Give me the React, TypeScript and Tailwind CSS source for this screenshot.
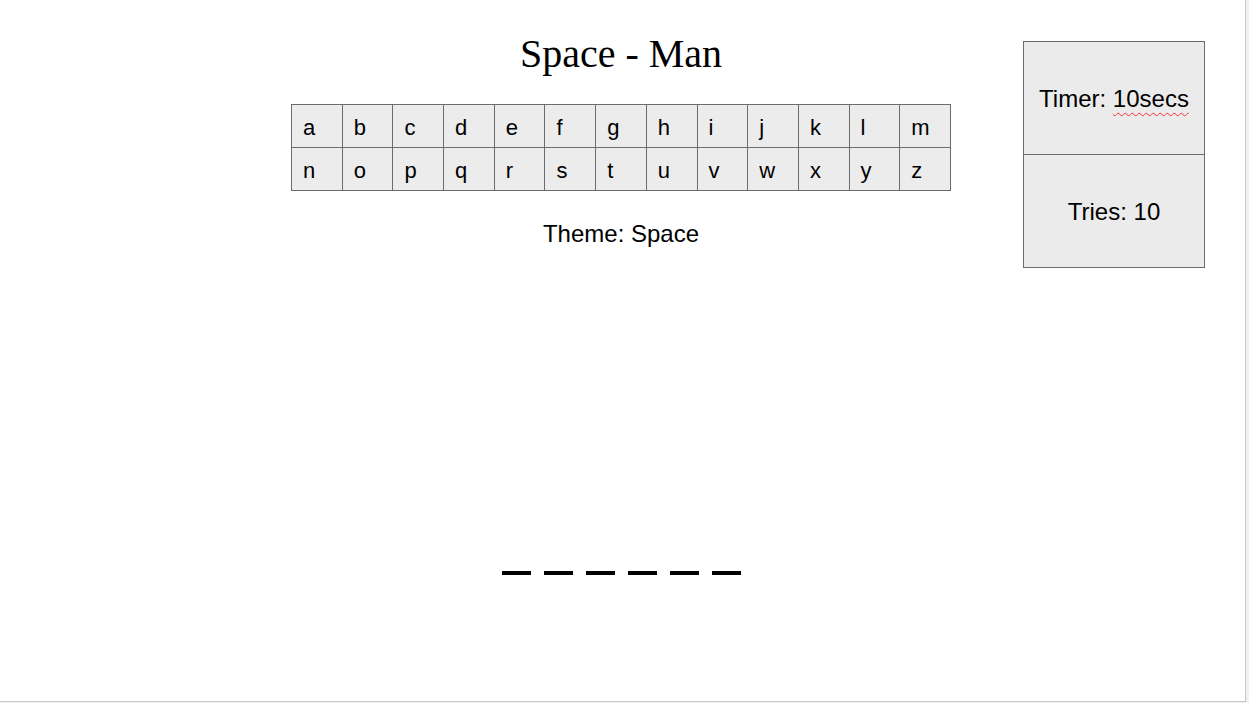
const rows = ["abcdefghijklm", "nopqrstuvwxyz"];

function LetterGrid() {
  return (
    <div className="grid w-[660px] grid-cols-13 border-l border-t border-[#6b6b6b]">
      {rows.join("").split("").map((ch) => (
        <div
          key={ch}
          className="flex h-[43px] items-center border-b border-r border-[#6b6b6b] bg-[#ececec] pl-[11px] pt-[2px] text-[22px] leading-[25px] text-black"
        >
          {ch}
        </div>
      ))}
    </div>
  );
}

function StatsPanel() {
  return (
    <div className="mt-[41px] ml-[72px] flex w-[182px] flex-col self-start border border-[#6b6b6b] bg-[#ebebeb] text-[24px] text-black">
      <div className="flex h-[113px] items-center justify-center border-b border-[#6b6b6b] pt-[1px]">
        <span>
          Timer:{" "}
          <span className="underline decoration-red-500 decoration-wavy decoration-1 underline-offset-[5px]">
            10secs
          </span>
        </span>
      </div>
      <div className="flex h-[112px] items-center justify-center pt-[2px]">Tries: 10</div>
    </div>
  );
}

export default function App() {
  return (
    <div className="h-[703px] w-[1249px] overflow-hidden bg-[#f0f0f0]">
      <div
        className="flex h-[702px] w-[1246px] border-b border-r border-[#c8c8c8] bg-white pl-[291px]"
        style={{ fontFamily: '"Liberation Sans", Arial, sans-serif' }}
      >
        <div className="flex w-[660px] flex-col items-center">
          <h1
            className="mt-[34px] text-[40px] leading-[40px] text-black"
            style={{ fontFamily: '"Liberation Serif", "Times New Roman", serif' }}
          >
            Space - Man
          </h1>
          <div className="mt-[30px]">
            <LetterGrid />
          </div>
          <div className="mt-[29px] text-[24px] leading-[28px] text-black">Theme: Space</div>
          <div className="mt-[323px] flex gap-[13px]">
            {[0, 1, 2, 3, 4, 5].map((i) => (
              <div key={i} className="h-[4px] w-[29px] bg-black" />
            ))}
          </div>
        </div>
        <StatsPanel />
      </div>
    </div>
  );
}
